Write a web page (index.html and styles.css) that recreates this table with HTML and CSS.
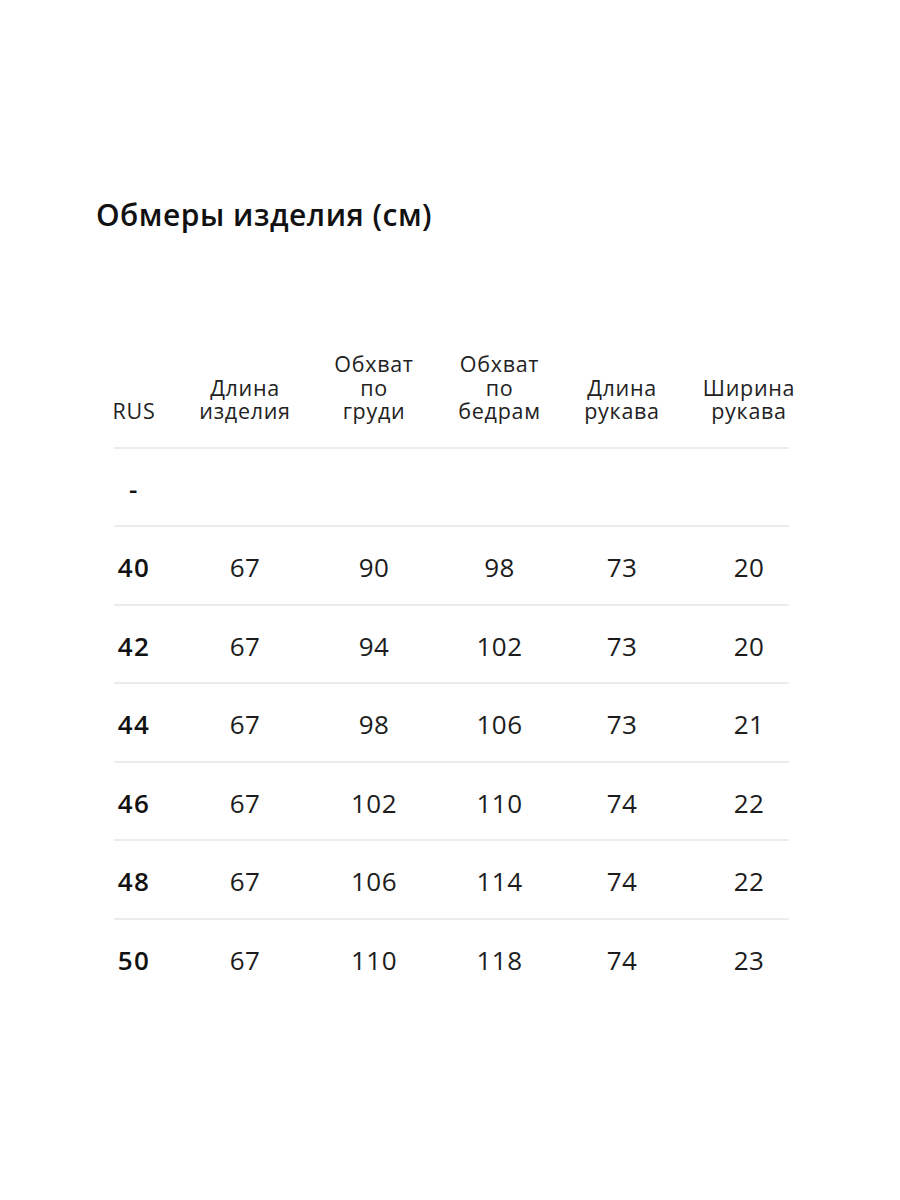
FILE: index.html
```
<!DOCTYPE html>
<html lang="ru">
<head>
<meta charset="utf-8">
<title>Обмеры изделия (см)</title>
<link rel="stylesheet" href="styles.css">
</head>
<body>
<main class="page">
  <h1 class="title">Обмеры изделия (см)</h1>
  <div class="table">
    <div class="row head">
      <div class="cell"><span>RUS</span></div>
      <div class="cell"><span>Длина<br>изделия</span></div>
      <div class="cell"><span>Обхват<br>по<br>груди</span></div>
      <div class="cell"><span>Обхват<br>по<br>бедрам</span></div>
      <div class="cell"><span>Длина<br>рукава</span></div>
      <div class="cell"><span>Ширина<br>рукава</span></div>
    </div>
    <div class="row">
      <div class="cell key"><span>-</span></div>
      <div class="cell"></div><div class="cell"></div><div class="cell"></div><div class="cell"></div><div class="cell"></div>
    </div>
    <div class="row">
      <div class="cell key"><span>40</span></div>
      <div class="cell"><span>67</span></div><div class="cell"><span>90</span></div><div class="cell"><span>98</span></div><div class="cell"><span>73</span></div><div class="cell"><span>20</span></div>
    </div>
    <div class="row">
      <div class="cell key"><span>42</span></div>
      <div class="cell"><span>67</span></div><div class="cell"><span>94</span></div><div class="cell"><span>102</span></div><div class="cell"><span>73</span></div><div class="cell"><span>20</span></div>
    </div>
    <div class="row">
      <div class="cell key"><span>44</span></div>
      <div class="cell"><span>67</span></div><div class="cell"><span>98</span></div><div class="cell"><span>106</span></div><div class="cell"><span>73</span></div><div class="cell"><span>21</span></div>
    </div>
    <div class="row">
      <div class="cell key"><span>46</span></div>
      <div class="cell"><span>67</span></div><div class="cell"><span>102</span></div><div class="cell"><span>110</span></div><div class="cell"><span>74</span></div><div class="cell"><span>22</span></div>
    </div>
    <div class="row">
      <div class="cell key"><span>48</span></div>
      <div class="cell"><span>67</span></div><div class="cell"><span>106</span></div><div class="cell"><span>114</span></div><div class="cell"><span>74</span></div><div class="cell"><span>22</span></div>
    </div>
    <div class="row last">
      <div class="cell key"><span>50</span></div>
      <div class="cell"><span>67</span></div><div class="cell"><span>110</span></div><div class="cell"><span>118</span></div><div class="cell"><span>74</span></div><div class="cell"><span>23</span></div>
    </div>
  </div>
</main>
</body>
</html>
```
FILE: styles.css
```
html, body {
  margin: 0;
  padding: 0;
  background: #ffffff;
}
body {
  font-family: "Open Sans", "Noto Sans", sans-serif;
  color: #1c1c1c;
}
.page {
  padding: 196px 0 0 96px;
}
.title {
  margin: 0;
  font-size: 30px;
  font-weight: 600;
  line-height: 38px;
  color: #111111;
  letter-spacing: 0.5px;
}
.table {
  margin: 118px 0 0 18px;
  width: 675px;
}
.row {
  display: grid;
  grid-template-columns: 40px 182px 76px 175px 70px 184px;
  box-sizing: border-box;
  height: 78.5px;
  padding-top: 28px;
  border-bottom: 2px solid #ececec;
  font-size: 26px;
  line-height: 24px;
  letter-spacing: 0.4px;
}
.row.last {
  border-bottom: none;
}
.row.head {
  height: auto;
  padding: 0 0 24px;
  align-items: end;
  font-size: 21.5px;
  line-height: 23.5px;
  letter-spacing: 0.7px;
  color: #222222;
}
.cell {
  display: flex;
  justify-content: center;
  text-align: center;
  white-space: nowrap;
}
.key {
  font-size: 26px;
  font-weight: 600;
  letter-spacing: 1.5px;
  color: #111111;
}
```
